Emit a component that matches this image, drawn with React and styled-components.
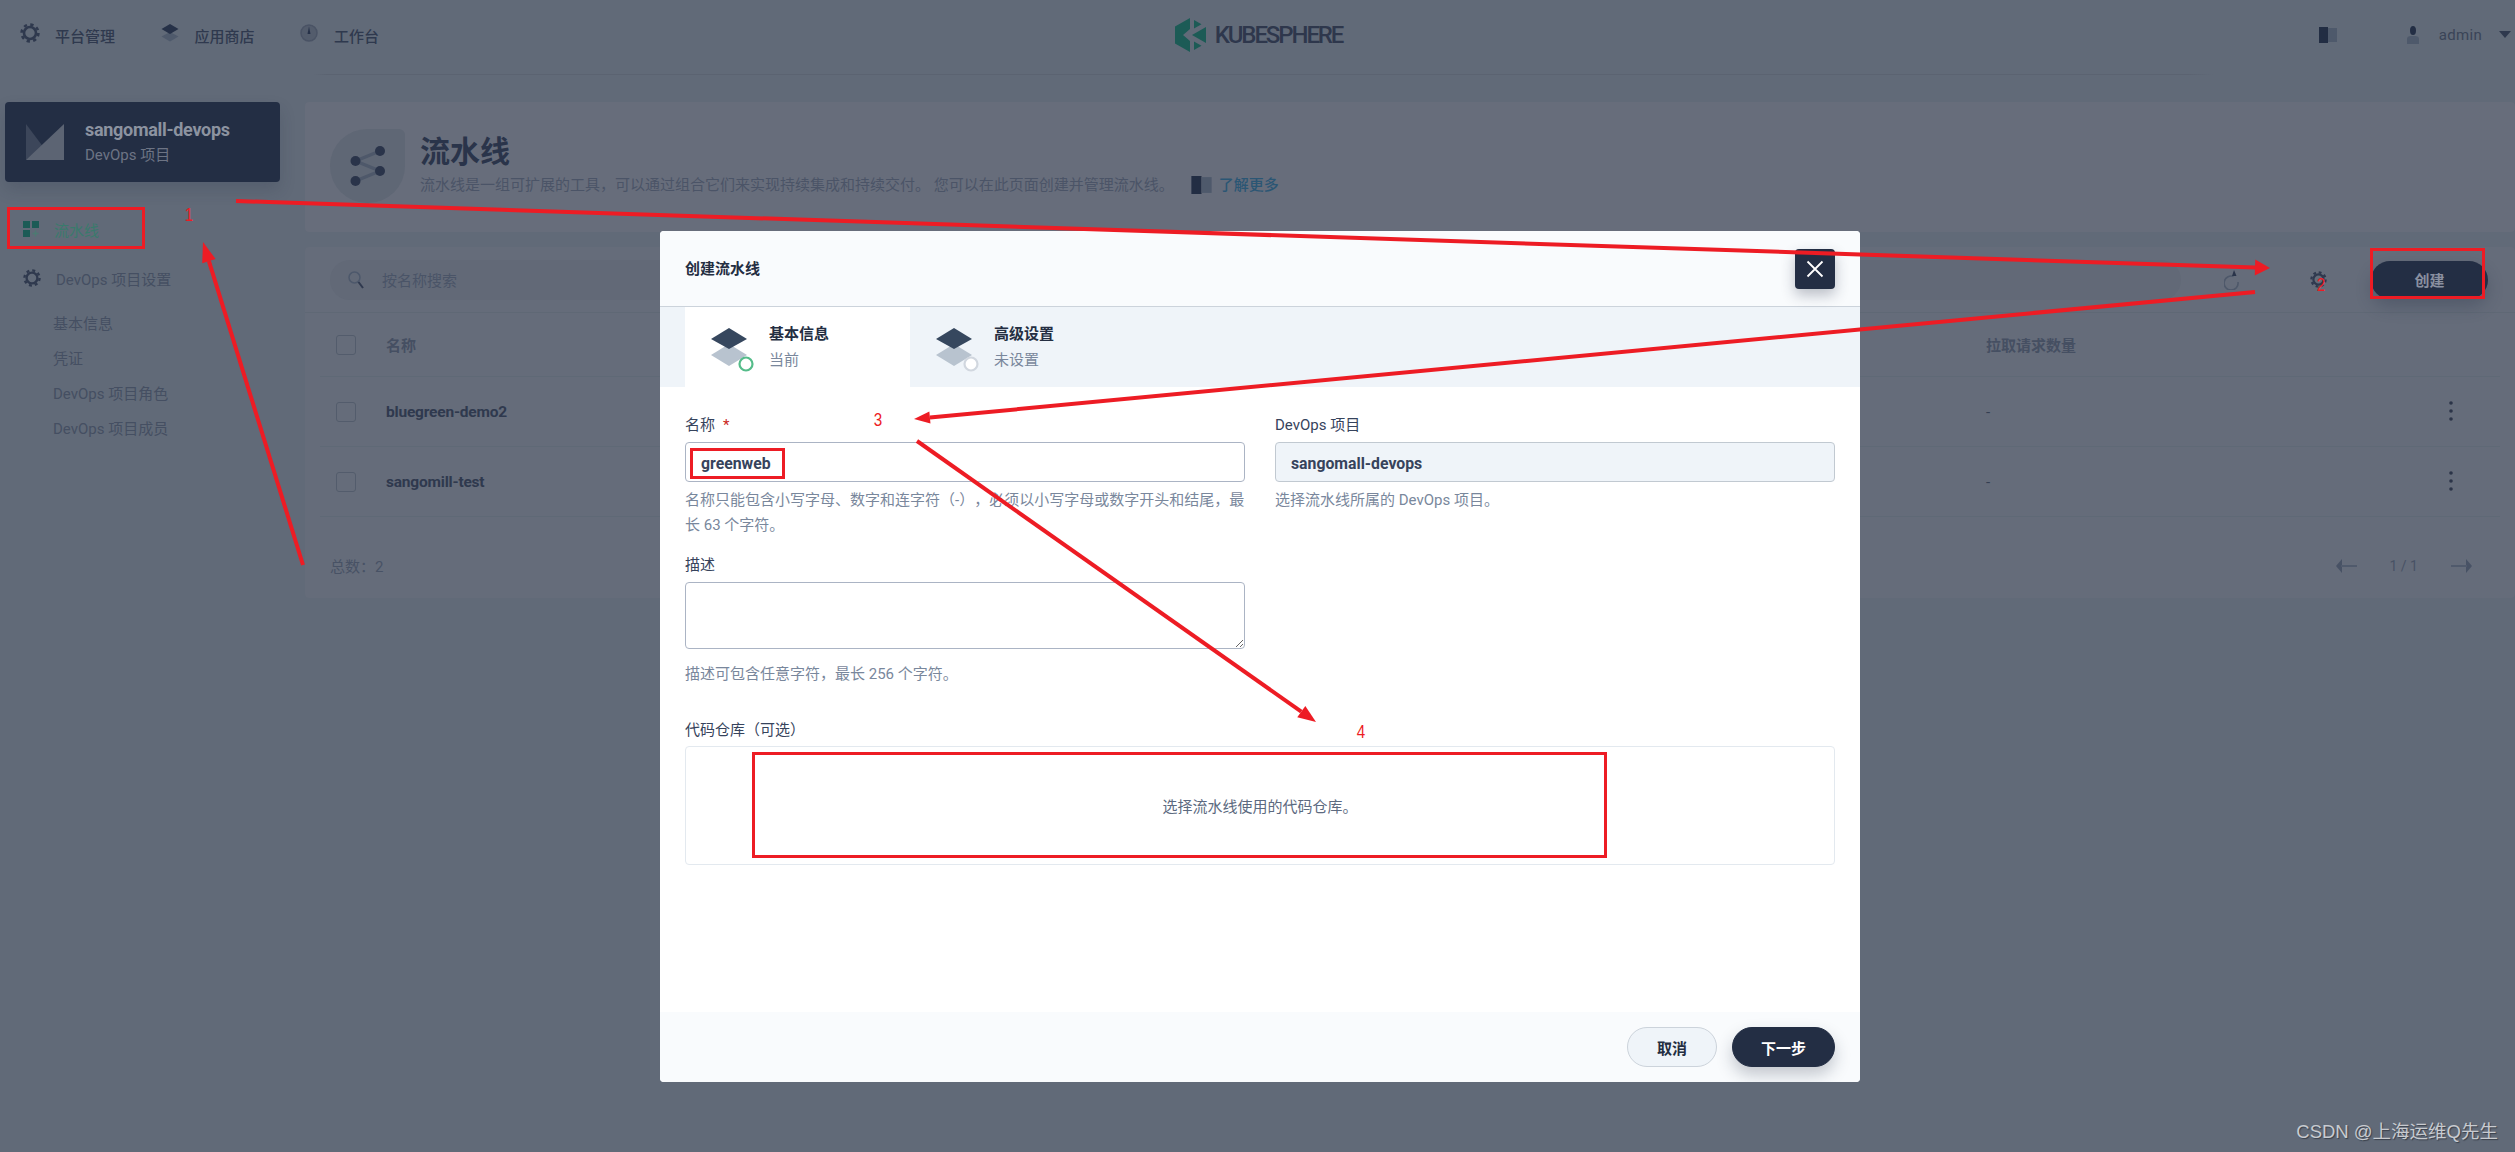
import React from "react";
import styled, { createGlobalStyle } from "styled-components";

const FONT = `Roboto, "Noto Sans CJK SC", "Liberation Sans", sans-serif`;
const RED = "#ed1c24";
const DARK = "#232e44";
const INK = "#2f394e";
const MUTED = "#454f62";

const Global = createGlobalStyle`
  html, body { margin: 0; padding: 0; background: #616a78; }
  body { font-family: ${FONT}; text-spacing-trim: space-all; }
  * { box-sizing: border-box; }
`;

const Page = styled.div`
  position: relative;
  width: 2515px;
  height: 1152px;
  overflow: hidden;
  background: #616a78;
  color: ${INK};
  font-size: 15px;
`;

/* ---------- top bar ---------- */
const TopBar = styled.header`
  height: 75px;
  display: grid;
  grid-template-columns: 1fr auto 1fr;
  align-items: center;
  border-bottom: 1px solid;
  border-image: linear-gradient(90deg, transparent 12.5%, #5b6371 13%, #5b6371 87%, transparent 88%) 1;
`;
const TopNav = styled.nav`
  display: flex;
  padding-left: 20px;
  margin-top: -3px;
`;
const TopNavItem = styled.div`
  width: 139.5px;
  display: flex;
  align-items: center;
  gap: 15px;
  font-weight: 500;
  color: ${INK};
  svg { margin-top: -5px; }
`;
const Brand = styled.div`
  display: flex;
  align-items: center;
  gap: 9px;
  margin-top: -5px;
  padding-left: 2px;
`;
const BrandName = styled.span`
  font-size: 24px;
  font-weight: 500;
  letter-spacing: -2.1px;
  color: #2e374c;
`;
const TopRight = styled.div`
  display: flex;
  align-items: center;
  justify-content: flex-end;
  padding-right: 4px;
  margin-top: -5px;
`;
const UserName = styled.span`
  margin: 0 17px 0 19px;
  color: #3a4457;
  font-size: 15px;
  letter-spacing: .3px;
`;
const TopBook = styled.span`
  display: flex;
  margin-right: 69px;
`;

/* ---------- layout ---------- */
const Body = styled.div`
  display: flex;
  padding-top: 27px;
`;
const Side = styled.aside`
  width: 305px;
  flex: none;
  padding-left: 5px;
`;
const Content = styled.main`
  flex: 1;
  display: flex;
  flex-direction: column;
  gap: 15px;
`;

/* ---------- sidebar ---------- */
const ProjectCard = styled.div`
  width: 275px;
  height: 80px;
  background: ${DARK};
  border-radius: 4px;
  display: flex;
  align-items: center;
  padding-left: 21px;
  gap: 21px;
  box-shadow: 0 8px 16px rgba(35, 46, 68, .18);
`;
const ProjectText = styled.div`
  display: flex;
  flex-direction: column;
  gap: 5px;
`;
const ProjectName = styled.div`
  color: #8c93a0;
  font-size: 18px;
  line-height: 20px;
  font-weight: 700;
  letter-spacing: -.3px;
`;
const ProjectSub = styled.div`
  color: #6d7484;
  font-size: 15px;
  line-height: 20px;
`;
const SideNav = styled.div`
  display: flex;
  align-items: center;
  gap: 15px;
  padding-left: 18px;
  height: 20px;
  margin-top: ${p => p.$top}px;
  color: ${p => (p.$active ? "#3a7a6c" : MUTED)};
`;
const SideSub = styled.div`
  padding-left: 48px;
  height: 35px;
  line-height: 35px;
  color: ${MUTED};
  &:first-of-type { margin-top: 19px; }
`;

/* ---------- banner ---------- */
const Banner = styled.section`
  height: 130px;
  background: #676d7b;
  border-radius: 4px;
  display: flex;
  padding: 27px 0 0 25px;
  gap: 15px;
`;
const BannerBadge = styled.div`
  width: 75px;
  height: 74px;
  border-radius: 50% 6px 50% 50%;
  background: #5f6775;
  display: flex;
  align-items: center;
  justify-content: center;
`;
const BannerText = styled.div`
  display: flex;
  flex-direction: column;
`;
const BannerTitle = styled.h1`
  margin: 0;
  font-size: 30px;
  line-height: 46px;
  font-weight: 700;
  color: #2a344a;
`;
const BannerDesc = styled.div`
  display: flex;
  align-items: center;
  color: #4b5467;
  font-size: 15px;
  line-height: 20px;
`;
const LearnMore = styled.span`
  display: inline-flex;
  align-items: center;
  gap: 7px;
  margin-left: 17px;
  font-weight: 500;
  color: #2b5674;
`;

/* ---------- table ---------- */
const Panel = styled.section`
  height: 351px;
  background: #656c7a;
  border-radius: 4px;
  display: flex;
  flex-direction: column;
`;
const Toolbar = styled.div`
  height: 66px;
  padding: 13px 26px 13px 25px;
  display: flex;
  align-items: center;
  border-bottom: 1px solid #5f6875;
`;
const Search = styled.div`
  width: 1851px;
  height: 40px;
  border-radius: 20px;
  background: #626977;
  display: flex;
  align-items: center;
  gap: 18px;
  padding-left: 18px;
  color: #4a5467;
`;
const ToolIcon = styled.span`
  display: flex;
  margin-left: ${p => p.$ml}px;
`;
const CreateButton = styled.button`
  width: 117px;
  height: 38px;
  margin-left: 44px;
  border: 0;
  border-radius: 19px;
  background: ${DARK};
  color: #8a90a0;
  font: 700 15px ${FONT};
  box-shadow: 0 8px 16px rgba(35, 46, 68, .28);
`;
const Row = styled.div`
  height: ${p => p.$h}px;
  margin: 0 15px;
  padding-left: 16px;
  display: grid;
  grid-template-columns: 50px 1600px 463px 1fr;
  align-items: center;
  border-bottom: 1px solid #5f6976;
`;
const Check = styled.span`
  display: block;
  width: 20px;
  height: 20px;
  border: 1px solid #535c6c;
  border-radius: 3px;
`;
const HeadCell = styled.span`
  font-weight: 700;
  color: #454f62;
`;
const NameCell = styled.span`
  font-weight: 700;
  color: ${INK};
  font-size: 15.5px;
  letter-spacing: -.2px;
`;
const DashCell = styled.span`
  color: #353f52;
`;
const Kebab = styled.span`
  display: flex;
  margin-top: -2px;
`;
const PanelFoot = styled.div`
  flex: 1;
  display: flex;
  align-items: center;
  justify-content: space-between;
  padding: 16px 43px 0 25px;
  color: #485265;
`;
const Pager = styled.div`
  display: flex;
  align-items: center;
  gap: 33px;
  font-size: 14px;
`;

/* ---------- modal ---------- */
const Modal = styled.div`
  position: absolute;
  left: 660px;
  top: 231px;
  width: 1200px;
  height: 851px;
  border-radius: 4px;
  background: #fff;
  display: flex;
  flex-direction: column;
  overflow: hidden;
`;
const ModalHead = styled.div`
  height: 76px;
  flex: none;
  padding: 0 0 3px 25px;
  display: flex;
  align-items: center;
  background: #f9fbfd;
  border-bottom: 1px solid #ccd3db;
  font-size: 15px;
  font-weight: 700;
  color: #242e42;
`;
const CloseButton = styled.button`
  position: absolute;
  left: 1135px;
  top: 249px;
  width: 40px;
  height: 40px;
  padding: 0;
  border: 0;
  border-radius: 4px;
  background: ${DARK};
  display: flex;
  align-items: center;
  justify-content: center;
  box-shadow: 0 6px 14px rgba(35, 46, 68, .3);
`;
const CloseWrap = styled.div`
  position: absolute;
  left: 660px;
  top: 0;
`;
const Tabs = styled.div`
  height: 80px;
  flex: none;
  padding-left: 25px;
  display: flex;
  background: #eff4f9;
`;
const Tab = styled.div`
  width: 225px;
  background: ${p => (p.$active ? "#fff" : "transparent")};
  display: flex;
  padding: 17px 0 0 25px;
  gap: 9px;
  svg { margin-top: -3px; }
`;
const TabText = styled.div`
  display: flex;
  flex-direction: column;
  gap: 5px;
`;
const TabTitle = styled.div`
  font-size: 15px;
  line-height: 21px;
  font-weight: 700;
  color: #242e42;
`;
const TabSub = styled.div`
  font-size: 15px;
  line-height: 21px;
  color: #79879c;
`;
const Form = styled.div`
  flex: 1;
  padding: 27px 25px 0;
`;
const Columns = styled.div`
  display: grid;
  grid-template-columns: 560px 560px;
  gap: 30px;
`;
const Label = styled.div`
  height: 20px;
  line-height: 22px;
  margin-top: ${p => p.$top || 0}px;
  margin-bottom: ${p => p.$bottom || 8}px;
  color: #36435c;
  font-size: 15px;
`;
const Star = styled.span`
  color: #ca2621;
  margin-left: 8px;
`;
const TextInput = styled.input`
  display: block;
  width: 100%;
  height: 40px;
  border: 1px solid ${p => (p.$locked ? "#c1c9d1" : "#abb4c4")};
  border-radius: 4px;
  padding: 2px 15px 0;
  outline: 0;
  background: ${p => (p.$locked ? "#eff4f9" : "#fff")};
  color: #36435c;
  font: 700 15.8px ${FONT};
`;
const TextArea = styled.textarea`
  display: block;
  width: 100%;
  height: 67px;
  border: 1px solid #abb4c4;
  border-radius: 4px;
  outline: 0;
  margin: 0;
  background: #fff;
`;
const Hint = styled.div`
  margin-top: ${p => p.$top}px;
  line-height: 25px;
  color: #79879c;
  font-size: 15px;
`;
const RepoBox = styled.div`
  height: 119px;
  border: 1px solid #e3e9ef;
  border-radius: 4px;
  display: flex;
  align-items: center;
  justify-content: center;
  color: #5c6a80;
  font-size: 15px;
`;
const ModalFoot = styled.div`
  height: 70px;
  flex: none;
  background: #f9fbfd;
  display: flex;
  justify-content: flex-end;
  gap: 15px;
  padding: 15px 25px;
`;
const Pill = styled.button`
  width: ${p => p.$w}px;
  height: 40px;
  border-radius: 20px;
  font: 700 15px ${FONT};
  border: 1px solid ${p => (p.$primary ? DARK : "#ccd3db")};
  background: ${p => (p.$primary ? DARK : "#eff4f9")};
  color: ${p => (p.$primary ? "#fff" : "#242e42")};
  box-shadow: ${p => (p.$primary ? "0 8px 16px rgba(35,46,68,.25)" : "none")};
`;

/* ---------- annotations ---------- */
const Markup = styled.svg`
  position: absolute;
  left: 0;
  top: 0;
  pointer-events: none;
`;
const Number = styled.span`
  position: absolute;
  left: ${p => p.$x}px;
  top: ${p => p.$y}px;
  color: ${RED};
  font: 19px/20px "Liberation Sans", sans-serif;
  transform: translate(-50%, -50%) scaleX(.8);
`;
const Watermark = styled.div`
  position: absolute;
  right: 17px;
  top: 1121px;
  color: #c8cbd0;
  font: 18.5px/22px "Liberation Sans", "Noto Sans CJK SC", sans-serif;
  text-shadow: 1px 1px 1px rgba(30, 35, 45, .6);
`;

/* ---------- icons ---------- */
const Gear = ({ size = 18, color = INK }) => (
  <svg width={size} height={size} viewBox="0 0 20 20" fill="none">
    <circle cx="10" cy="10" r="8.4" stroke={color} strokeWidth="2.6" strokeDasharray="3.3 3.3" />
    <circle cx="10" cy="10" r="6" stroke={color} strokeWidth="2.6" />
  </svg>
);
const Layers = () => (
  <svg width="20" height="20" viewBox="0 0 20 20">
    <path d="M10 9 L18.5 13.5 L10 18.5 L1.5 13.5 Z" fill="#4f5a6c" />
    <path d="M10 1 L18.5 6 L10 11 L1.5 6 Z" fill="#263148" />
  </svg>
);
const Dial = () => (
  <svg width="20" height="20" viewBox="0 0 20 20">
    <circle cx="10" cy="10" r="8" fill="#535c6c" stroke="#4a5365" strokeWidth="1.5" />
    <path d="M10 3.5 L11.5 11 H8.5 Z" fill="#263148" />
  </svg>
);
const Book = ({ w = 18, h = 16 }) => (
  <svg width={w} height={h} viewBox="0 0 18 16">
    <rect x="0" y="0" width="9" height="16" fill="#222d43" />
    <rect x="9" y="1" width="9" height="14" fill="#4e596b" />
  </svg>
);
const Person = () => (
  <svg width="14" height="18" viewBox="0 0 14 18">
    <ellipse cx="7" cy="4.5" rx="3" ry="4.5" fill="#232e44" />
    <path d="M1 18 V13 Q1 10 5 10 H9 Q13 10 13 13 V18 Z" fill="#4e596b" />
  </svg>
);
const Caret = () => (
  <svg width="12" height="7" viewBox="0 0 12 7"><path d="M0 0 H12 L6 7 Z" fill="#2f394e" /></svg>
);
const Logo = () => (
  <svg width="31" height="34" viewBox="0 0 31 34" fill="#1c5b56">
    <polygon points="0,8.5 15,0 15,11 8,17 15,23 15,34 0,25.5" />
    <polygon points="19,2 26.5,6.2 19,10.5" />
    <polygon points="31,9 31,25 17,17" />
    <polygon points="19,23.5 26.5,27.8 19,32" />
  </svg>
);
const Tile = () => (
  <svg width="16" height="16" viewBox="0 0 16 16">
    <rect x="0" y="0" width="7" height="7" fill="#1c5b56" />
    <rect x="9" y="0" width="7" height="7" fill="#1c5b56" />
    <rect x="0" y="9" width="7" height="7" fill="#1c5b56" />
    <path d="M12.5 9.5 V15.5 M9.5 12.5 H15.5" stroke="#4d7a72" strokeWidth="1.4" />
  </svg>
);
const ProjectMark = () => (
  <svg width="38" height="36" viewBox="0 0 38 36">
    <polygon points="0,0 18,24 0,36" fill="#3c465a" />
    <polygon points="38,0 38,36 0,36" fill="#5c6473" />
  </svg>
);
const Share = () => (
  <svg width="36" height="40" viewBox="0 0 36 40">
    <path d="M5.500 15 L30 5 M5.500 15 L30 25 M5.500 35 L30 25" stroke="#4e586a" strokeWidth="3.500" />
    <circle cx="5.500" cy="15" r="5" fill="#2a344a" />
    <circle cx="30" cy="5" r="5" fill="#2a344a" />
    <circle cx="30" cy="25" r="5" fill="#2a344a" />
    <circle cx="5.500" cy="35" r="5" fill="#2a344a" />
  </svg>
);
const Magnifier = () => (
  <svg width="16" height="18" viewBox="0 0 16 18" fill="none">
    <circle cx="6.500" cy="6.500" r="5.500" stroke="#4d586b" strokeWidth="1.500" />
    <path d="M10.500 11 L15 17" stroke="#2f394e" strokeWidth="2" />
  </svg>
);
const Refresh = () => (
  <svg width="16" height="20" viewBox="0 0 16 20" fill="none">
    <path d="M10.500 4.500 A7 7 0 1 0 15 10" transform="translate(-1 2)" stroke="#4e586a" strokeWidth="1.600" />
    <path d="M10 0 L12.500 6 H8 Z" fill="#2a344a" />
  </svg>
);
const Dots = () => (
  <svg width="4" height="20" viewBox="0 0 4 20" fill="#2b3448">
    <circle cx="2" cy="2" r="1.800" /><circle cx="2" cy="10" r="1.800" /><circle cx="2" cy="18" r="1.800" />
  </svg>
);
const PagerArrow = ({ flip }) => (
  <svg width="21" height="14" viewBox="0 0 21 14" style={flip ? { transform: "scaleX(-1)" } : undefined}>
    <path d="M0 7 L6 0 V14 Z" fill="#485265" />
    <rect x="5" y="6" width="16" height="2" fill="#505a6c" />
  </svg>
);
const TabIcon = ({ ring }) => (
  <svg width="50" height="60" viewBox="0 0 50 60" fill="none">
    <polygon points="19,23 37,34 19,45 1,34" fill="#b8c3cf" />
    <polygon points="19,7 37,18 19,28 1,18" fill="#36475e" />
    <circle cx="36" cy="43" r="6.500" fill="#fff" stroke={ring} strokeWidth="2.200" />
  </svg>
);
const CloseIcon = () => (
  <svg width="18" height="18" viewBox="0 0 18 18" stroke="#fff" strokeWidth="1.800" fill="none">
    <path d="M1.500 1.500 L16.500 16.500 M16.500 1.500 L1.500 16.500" />
  </svg>
);

const Arrow = ({ x1, y1, x2, y2, len = 16, wide = 8 }) => {
  const a = Math.atan2(y2 - y1, x2 - x1);
  const bx = x2 - len * Math.cos(a);
  const by = y2 - len * Math.sin(a);
  const px = Math.sin(a) * wide;
  const py = -Math.cos(a) * wide;
  return (
    <g>
      <line x1={x1} y1={y1} x2={bx} y2={by} stroke={RED} strokeWidth="4" />
      <polygon points={`${x2},${y2} ${bx + px},${by + py} ${bx - px},${by - py}`} fill={RED} />
    </g>
  );
};

const Box = ({ x, y, w, h }) => (
  <rect x={x} y={y} width={w} height={h} fill="none" stroke={RED} strokeWidth="3" />
);

export default function App() {
  return (
    <Page>
      <Global />
      <TopBar>
        <TopNav>
          <TopNavItem><Gear size={20} />平台管理</TopNavItem>
          <TopNavItem><Layers />应用商店</TopNavItem>
          <TopNavItem><Dial />工作台</TopNavItem>
        </TopNav>
        <Brand><Logo /><BrandName>KUBESPHERE</BrandName></Brand>
        <TopRight>
          <TopBook><Book /></TopBook>
          <Person />
          <UserName>admin</UserName>
          <Caret />
        </TopRight>
      </TopBar>

      <Body>
        <Side>
          <ProjectCard>
            <ProjectMark />
            <ProjectText>
              <ProjectName>sangomall-devops</ProjectName>
              <ProjectSub>DevOps 项目</ProjectSub>
            </ProjectText>
          </ProjectCard>
          <SideNav $active $top={37}><Tile />流水线</SideNav>
          <SideNav $top={29}><Gear size={18} color="#2f394e" />DevOps 项目设置</SideNav>
          <div>
            <SideSub>基本信息</SideSub>
            <SideSub>凭证</SideSub>
            <SideSub>DevOps 项目角色</SideSub>
            <SideSub>DevOps 项目成员</SideSub>
          </div>
        </Side>

        <Content>
          <Banner>
            <BannerBadge><Share /></BannerBadge>
            <BannerText>
              <BannerTitle>流水线</BannerTitle>
              <BannerDesc>
                流水线是一组可扩展的工具，可以通过组合它们来实现持续集成和持续交付。 您可以在此页面创建并管理流水线。
                <LearnMore><Book w={21} h={18} />了解更多</LearnMore>
              </BannerDesc>
            </BannerText>
          </Banner>

          <Panel>
            <Toolbar>
              <Search><Magnifier />按名称搜索</Search>
              <ToolIcon $ml={43}><Refresh /></ToolIcon>
              <ToolIcon $ml={70}><Gear size={17} /></ToolIcon>
              <CreateButton>创建</CreateButton>
            </Toolbar>
            <Row $h={64}>
              <Check />
              <HeadCell>名称</HeadCell>
              <HeadCell>拉取请求数量</HeadCell>
            </Row>
            <Row $h={70}>
              <Check />
              <NameCell>bluegreen-demo2</NameCell>
              <DashCell>-</DashCell>
              <Kebab><Dots /></Kebab>
            </Row>
            <Row $h={70}>
              <Check />
              <NameCell>sangomill-test</NameCell>
              <DashCell>-</DashCell>
              <Kebab><Dots /></Kebab>
            </Row>
            <PanelFoot>
              <span>总数：2</span>
              <Pager>
                <PagerArrow />
                <span>1 / 1</span>
                <PagerArrow flip />
              </Pager>
            </PanelFoot>
          </Panel>
        </Content>
      </Body>

      <Modal>
        <ModalHead>创建流水线</ModalHead>
        <Tabs>
          <Tab $active>
            <TabIcon ring="#55bc8a" />
            <TabText>
              <TabTitle>基本信息</TabTitle>
              <TabSub>当前</TabSub>
            </TabText>
          </Tab>
          <Tab>
            <TabIcon ring="#d1d7df" />
            <TabText>
              <TabTitle>高级设置</TabTitle>
              <TabSub>未设置</TabSub>
            </TabText>
          </Tab>
        </Tabs>
        <Form>
          <Columns>
            <div>
              <Label>名称<Star>*</Star></Label>
              <TextInput readOnly value="greenweb" />
              <Hint $top={6}>名称只能包含小写字母、数字和连字符（-），必须以小写字母或数字开头和结尾，最长 63 个字符。</Hint>
              <Label $top={16}>描述</Label>
              <TextArea />
              <Hint $top={13}>描述可包含任意字符，最长 256 个字符。</Hint>
            </div>
            <div>
              <Label>DevOps 项目</Label>
              <TextInput readOnly $locked value="sangomall-devops" />
              <Hint $top={6}>选择流水线所属的 DevOps 项目。</Hint>
            </div>
          </Columns>
          <Label $top={32} $bottom={7}>代码仓库（可选）</Label>
          <RepoBox>选择流水线使用的代码仓库。</RepoBox>
        </Form>
        <ModalFoot>
          <Pill $w={90}>取消</Pill>
          <Pill $w={103} $primary>下一步</Pill>
        </ModalFoot>
      </Modal>
      <CloseWrap>
        <CloseButton><CloseIcon /></CloseButton>
      </CloseWrap>

      <Markup width="2515" height="1152" viewBox="0 0 2515 1152">
        <Box x={8.500} y={208.500} w={135} h={39} />
        <Box x={2371.500} y={249.500} w={112} h={48} />
        <Box x={691.500} y={449.500} w={92} h={28} />
        <Box x={753.500} y={753.500} w={852} h={103} />
        <Arrow x1={236} y1={201} x2={2270} y2={268} len={15} wide={8} />
        <Arrow x1={2255} y1={292} x2={914} y2={419} len={16} wide={6} />
        <Arrow x1={917} y1={441} x2={1316} y2={722} len={18} wide={7} />
        <Arrow x1={303} y1={565} x2={203} y2={242} len={20} wide={7} />
      </Markup>
      <Number $x={189} $y={215}>1</Number>
      <Number $x={2321} $y={285}>2</Number>
      <Number $x={878} $y={420}>3</Number>
      <Number $x={1361} $y={732}>4</Number>
      <Watermark>CSDN @上海运维Q先生</Watermark>
    </Page>
  );
}
